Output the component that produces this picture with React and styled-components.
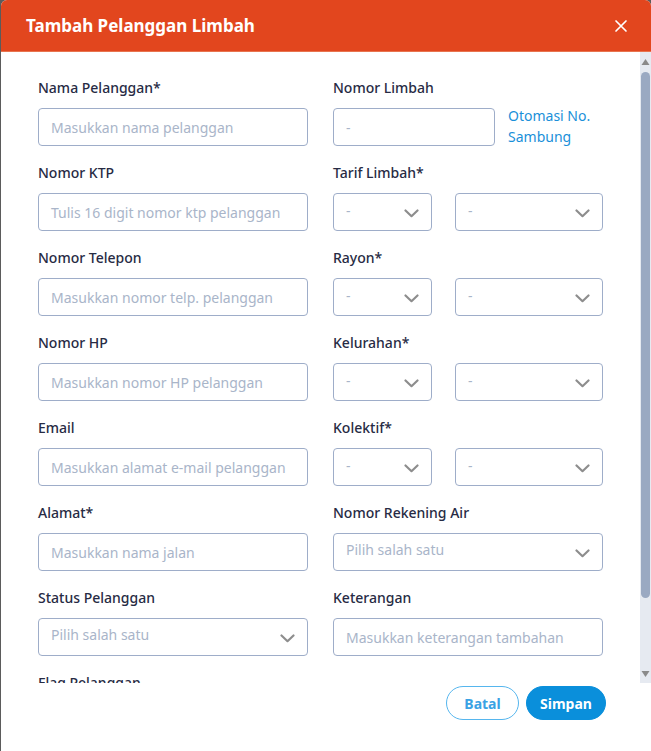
import React from 'react';
import styled, { createGlobalStyle } from 'styled-components';

const GlobalStyle = createGlobalStyle`
  html, body {
    margin: 0;
    padding: 0;
    background: #5b5b5b;
  }
  * { box-sizing: border-box; }
`;

const Chevron = () => (
  <svg width="15" height="9" viewBox="0 0 15 9" fill="none">
    <path d="M1.5 1.5 L7.5 7.2 L13.5 1.5" stroke="#8d8d8d" strokeWidth="2.2" strokeLinecap="round" strokeLinejoin="round" />
  </svg>
);

const CloseIcon = () => (
  <svg width="14" height="14" viewBox="0 0 14 14" fill="none">
    <path d="M2 2 L12 12 M12 2 L2 12" stroke="#fff" strokeWidth="1.7" strokeLinecap="round" />
  </svg>
);

const Arrow = ({ down }) => (
  <svg width="11" height="10" viewBox="0 0 11 10">
    <path d={down ? 'M1.5 2 L5.5 8 L9.5 2 Z' : 'M1.5 8 L5.5 2 L9.5 8 Z'} fill="#8a8a8a" />
  </svg>
);

const leftFields = [
  { label: 'Nama Pelanggan*', placeholder: 'Masukkan nama pelanggan' },
  { label: 'Nomor KTP', placeholder: 'Tulis 16 digit nomor ktp pelanggan' },
  { label: 'Nomor Telepon', placeholder: 'Masukkan nomor telp. pelanggan' },
  { label: 'Nomor HP', placeholder: 'Masukkan nomor HP pelanggan' },
  { label: 'Email', placeholder: 'Masukkan alamat e-mail pelanggan' },
  { label: 'Alamat*', placeholder: 'Masukkan nama jalan' },
];

const pairFields = ['Tarif Limbah*', 'Rayon*', 'Kelurahan*', 'Kolektif*'];

const SelectBox = ({ text, wide }) => (
  <Select $wide={wide}>
    <SelectText $wide={wide}>{text}</SelectText>
    <Chevron />
  </Select>
);

export default function App() {
  return (
    <>
      <GlobalStyle />
      <Modal>
        <Header>
          <Title>Tambah Pelanggan Limbah</Title>
          <CloseButton><CloseIcon /></CloseButton>
        </Header>
        <Body>
          <ScrollArea>
            <Form>
              <Column>
                {leftFields.map((f) => (
                  <Field key={f.label}>
                    <Label>{f.label}</Label>
                    <Input>{f.placeholder}</Input>
                  </Field>
                ))}
                <Field>
                  <Label>Status Pelanggan</Label>
                  <SelectBox text="Pilih salah satu" wide />
                </Field>
                <Field>
                  <Label>Flag Pelanggan</Label>
                  <SelectBox text="Pilih salah satu" wide />
                </Field>
              </Column>
              <Column>
                <Field>
                  <Label>Nomor Limbah</Label>
                  <InlineRow>
                    <ShortInput>-</ShortInput>
                    <Link>Otomasi No. Sambung</Link>
                  </InlineRow>
                </Field>
                {pairFields.map((l) => (
                  <Field key={l}>
                    <Label>{l}</Label>
                    <Pair>
                      <SelectBox text="-" />
                      <SelectBox text="-" />
                    </Pair>
                  </Field>
                ))}
                <Field>
                  <Label>Nomor Rekening Air</Label>
                  <SelectBox text="Pilih salah satu" wide />
                </Field>
                <Field>
                  <Label>Keterangan</Label>
                  <Input>Masukkan keterangan tambahan</Input>
                </Field>
              </Column>
            </Form>
          </ScrollArea>
          <Scrollbar>
            <Arrow />
            <Thumb />
            <Arrow down />
          </Scrollbar>
        </Body>
        <Footer>
          <GhostButton>Batal</GhostButton>
          <PrimaryButton>Simpan</PrimaryButton>
        </Footer>
      </Modal>
    </>
  );
}

const Modal = styled.div`
  margin-left: 1px;
  width: 650px;
  height: 751px;
  background: #fff;
  border-radius: 6px 6px 0 0;
  overflow: hidden;
  display: flex;
  flex-direction: column;
  font-family: "Noto Sans", "Open Sans", sans-serif;
`;

const Header = styled.div`
  height: 52px;
  flex-shrink: 0;
  background: #e2461e;
  border-bottom: 1px solid #e8744f;
  display: flex;
  align-items: center;
  justify-content: space-between;
  padding: 0 23px 0 25px;
`;

const Title = styled.h2`
  margin: 0;
  color: #fff;
  font-size: 17px;
  font-weight: 700;
`;

const CloseButton = styled.div`
  display: flex;
  align-items: center;
`;

const Body = styled.div`
  height: 631px;
  flex-shrink: 0;
  display: flex;
`;

const ScrollArea = styled.div`
  flex: 1;
  overflow: hidden;
`;

const Scrollbar = styled.div`
  width: 11px;
  flex-shrink: 0;
  background: #e6eaf1;
  display: flex;
  flex-direction: column;
  align-items: center;
  padding: 5px 0 4px;
  gap: 5px;
`;

const Thumb = styled.div`
  width: 9px;
  height: 526px;
  border-radius: 5px;
  background: #9aa9c2;
  margin-bottom: auto;
`;

const Form = styled.div`
  display: grid;
  grid-template-columns: 1fr 1fr;
  column-gap: 25px;
  padding: 26px 37px 30px 37px;
`;

const Column = styled.div`
  display: flex;
  flex-direction: column;
  gap: 17px;
`;

const Field = styled.div`
  display: flex;
  flex-direction: column;
  gap: 10px;
`;

const Label = styled.div`
  font-size: 14px;
  line-height: 20px;
  font-weight: 500;
  color: #272b44;
`;

const Input = styled.div`
  height: 38px;
  border: 1px solid #9eadc9;
  border-radius: 4px;
  padding: 0 12px;
  display: flex;
  align-items: center;
  font-size: 14px;
  color: #a9b5c9;
  white-space: nowrap;
  overflow: hidden;
`;

const InlineRow = styled.div`
  display: flex;
  align-items: flex-start;
  gap: 13px;
  height: 38px;
`;

const ShortInput = styled(Input)`
  width: 162px;
  flex-shrink: 0;
`;

const Link = styled.div`
  color: #1a90d9;
  font-size: 14px;
  line-height: 21px;
  margin-top: -3px;
`;

const Pair = styled.div`
  display: grid;
  grid-template-columns: 99px 1fr;
  column-gap: 23px;
`;

const Select = styled.div`
  height: 38px;
  border: 1px solid #9eadc9;
  border-radius: 4px;
  padding: 0 12px 0 12px;
  display: flex;
  align-items: center;
  justify-content: space-between;
  svg { margin-top: 3px; flex-shrink: 0; }
`;

const SelectText = styled.span`
  font-size: 14px;
  color: #a9b5c9;
  margin-top: ${(p) => (p.$wide ? '-6px' : '-4px')};
`;

const Footer = styled.div`
  flex: 1;
  display: flex;
  justify-content: flex-end;
  align-items: flex-start;
  gap: 7px;
  padding: 3px 45px 0 0;
`;

const ButtonBase = styled.button`
  height: 34px;
  border-radius: 17px;
  font-family: "Noto Sans", "Open Sans", sans-serif;
  font-size: 14px;
  font-weight: 700;
  cursor: pointer;
`;

const GhostButton = styled(ButtonBase)`
  width: 73px;
  background: #fff;
  border: 1px solid #56b6ee;
  color: #3aa2e4;
`;

const PrimaryButton = styled(ButtonBase)`
  width: 80px;
  background: #0a8fdb;
  border: 1px solid #0a8fdb;
  color: #fff;
`;
